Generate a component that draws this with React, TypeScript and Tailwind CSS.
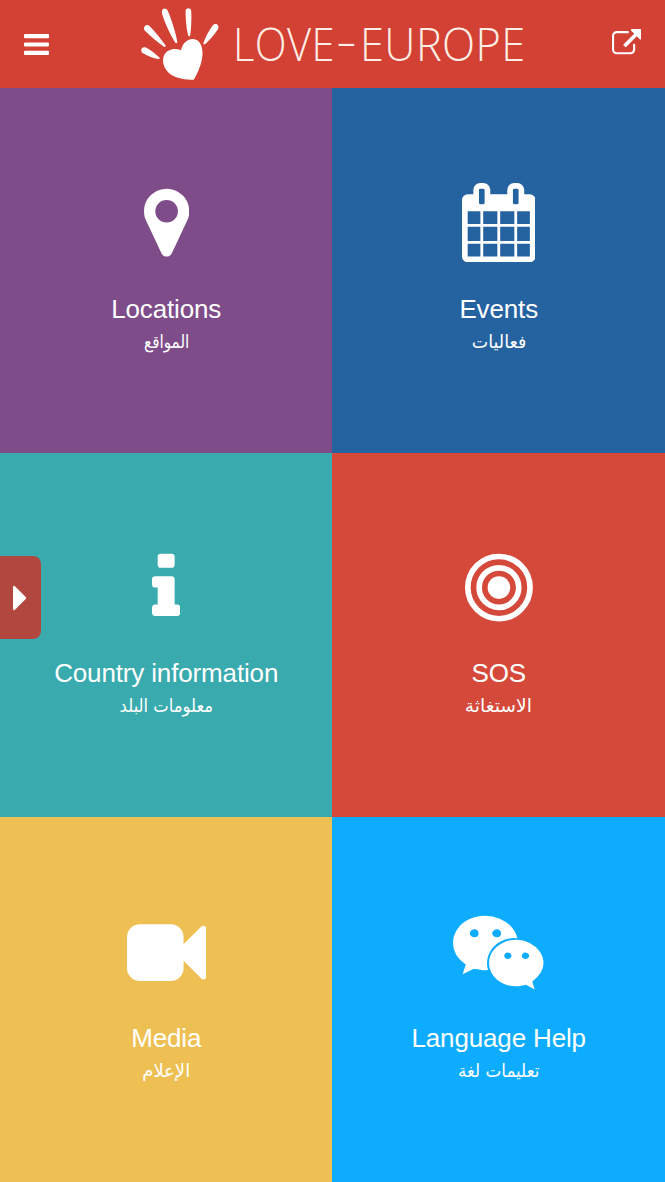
import type {ReactNode} from "react";

interface Tile {
	label: string;
	arabic: string;
	arabicScale: string;
	color: string;
	width: number;
	icon: ReactNode;
}

const tiles: Tile[] = [
	{
		label: "Locations",
		arabic: "المواقع",
		arabicScale: "scale-x-[0.85]",
		color: "bg-[#7e4c88]",
		width: 1024,
		icon: (
			<path d="M768 640q0-106-75-181t-181-75-181 75-75 181 75 181 181 75 181-75 75-181zm256 0q0 109-33 179l-364 774q-16 33-47.5 52t-67.5 19-67.5-19-46.5-52l-365-774q-33-70-33-179 0-212 150-362t362-150 362 150 150 362z" />
		),
	},
	{
		label: "Events",
		arabic: "فعاليات",
		arabicScale: "scale-x-[0.97]",
		color: "bg-[#2562a0]",
		width: 1664,
		icon: (
			<path d="M128 1664h288v-288h-288v288zm352 0h320v-288h-320v288zm-352-352h288v-320h-288v320zm352 0h320v-320h-320v320zm-352-384h288v-288h-288v288zm736 736h320v-288h-320v288zm-384-736h320v-288h-320v288zm768 736h288v-288h-288v288zm-384-352h320v-320h-320v320zm-352-864v-288q0-13-9.5-22.5t-22.5-9.5h-64q-13 0-22.5 9.5t-9.5 22.5v288q0 13 9.5 22.5t22.5 9.5h64q13 0 22.5-9.5t9.5-22.5zm736 864h288v-320h-288v320zm-384-384h320v-288h-320v288zm384 0h288v-288h-288v288zm32-480v-288q0-13-9.5-22.5t-22.5-9.5h-64q-13 0-22.5 9.5t-9.5 22.5v288q0 13 9.5 22.5t22.5 9.5h64q13 0 22.5-9.5t9.5-22.5zm384-64v1280q0 52-38 90t-90 38h-1408q-52 0-90-38t-38-90v-1280q0-52 38-90t90-38h128v-96q0-66 47-113t113-47h64q66 0 113 47t47 113v96h384v-96q0-66 47-113t113-47h64q66 0 113 47t47 113v96h128q52 0 90 38t38 90z" />
		),
	},
	{
		label: "Country information",
		arabic: "معلومات البلد",
		arabicScale: "scale-x-[0.91]",
		color: "bg-[#39aaad]",
		width: 640,
		icon: (
			<path d="M640 1344v128q0 26-19 45t-45 19h-512q-26 0-45-19t-19-45v-128q0-26 19-45t45-19h64v-384h-64q-26 0-45-19t-19-45v-128q0-26 19-45t45-19h384q26 0 45 19t19 45v576h64q26 0 45 19t19 45zm-128-1152v192q0 26-19 45t-45 19h-256q-26 0-45-19t-19-45v-192q0-26 19-45t45-19h256q26 0 45 19t19 45z" />
		),
	},
	{
		label: "SOS",
		arabic: "الاستغاثة",
		arabicScale: "scale-x-[1.04]",
		color: "bg-[#d5493b]",
		width: 1536,
		icon: (
			<>
				<circle cx="768" cy="896" r="256" />
				<g fill="none" stroke="currentColor" strokeWidth="128">
					<circle cx="768" cy="896" r="448" />
					<circle cx="768" cy="896" r="704" />
				</g>
			</>
		),
	},
	{
		label: "Media",
		arabic: "الإعلام",
		arabicScale: "scale-x-100",
		color: "bg-[#eec053]",
		width: 1792,
		icon: (
			<path d="M1792 352v1088q0 42-39 59-13 5-25 5-27 0-45-19l-403-403v166q0 119-84.5 203.5t-203.5 84.5h-704q-119 0-203.5-84.5t-84.5-203.5v-704q0-119 84.5-203.5t203.5-84.5h704q119 0 203.5 84.5t84.5 203.5v165l403-402q18-19 45-19 12 0 25 5 39 17 39 59z" />
		),
	},
	{
		label: "Language Help",
		arabic: "تعليمات لغة",
		arabicScale: "scale-x-[0.93]",
		color: "bg-[#0dacff]",
		width: 2048,
		icon: (
			<path d="M580 461q0-41-25-66t-66-25q-43 0-76 25.5t-33 65.5q0 39 33 64.5t76 25.5q41 0 66-24.5t25-65.5zm743 507q0-28-25.5-50t-65.5-22q-27 0-49.5 22.5t-22.5 49.5q0 28 22.5 50.5t49.5 22.5q40 0 65.5-22t25.5-51zm-236-507q0-41-24.5-66t-65.5-25q-43 0-76 25.5t-33 65.5q0 39 33 64.5t76 25.5q41 0 65.5-24.5t24.5-65.5zm635 507q0-28-26-50t-65-22q-27 0-49.5 22.5t-22.5 49.5q0 28 22.5 50.5t49.5 22.5q39 0 65-22t26-51zm-266-397q-31-4-70-4-169 0-311 77t-223.5 208.5-81.5 287.5q0 78 23 152-35 3-68 3-26 0-50-1.5t-55-6.5-44.5-7-54.5-10.5-50-10.5l-253 127 72-218q-290-203-290-490 0-169 97.5-311t264-223.5 363.5-81.5q176 0 332.5 66t262 182.5 136.5 260.5zm592 561q0 117-68.5 223.5t-185.5 193.5l55 181-199-109q-150 37-218 37-169 0-311-70.5t-223.5-191.5-81.5-264 81.5-264 223.5-191.5 311-70.5q161 0 303 70.5t227.5 192 85.5 263.5z" />
		),
	},
];

function HandLogo() {
	return (
		<svg className="h-[74px] w-[80px]" viewBox="140 7 80 74" fill="currentColor">
			<path d="M181 50.300C182.500 43 187.500 38.800 193 38.900C199.500 39.200 202.800 45.500 202.500 54C202.200 63 198 72.500 193.700 79.800C185.500 79.800 176 78.500 170 74C164 69 161.500 61.500 164 55.500C166.700 49.500 174.500 47.500 181 50.300Z" />
			<path d="M141.300 49.500C142 47.200 144 46.600 146 47.600C151 50.200 156 54.500 159.400 57.600C160.200 58.600 159.600 59.200 158.400 59C153.500 58.300 148 56 143 53.200C141.500 52.300 140.900 51 141.300 49.500Z" />
			<path d="M144.200 27.200C145.200 24.800 147.700 24.300 149.500 26C155.500 32 161.500 39.500 165.400 45.300C166 46.600 165.300 47.400 164 46.700C158.500 43 151.500 37 145.200 31C144 29.900 143.700 28.400 144.200 27.200Z" />
			<path d="M161.900 11.500C162.200 7.800 166 7.300 167.700 10.700C171.500 19 175.500 32 177.300 41.500C177.500 43.200 176.200 43.900 175.200 42.500C170.500 35 165 23.500 162.200 14C161.900 13 161.800 12.300 161.900 11.500Z" />
			<path d="M185.600 11C185.800 7.300 191 7.300 191.200 11C191.700 19 191.200 28 190.300 35C190 36.800 188.400 36.800 188 35C186.400 28 185.500 19 185.600 11Z" />
			<path d="M217.900 25.300C219 27 218.500 28.500 217.200 30.300C213.500 35.700 209.500 40.300 205.300 44C204 45 203 44.300 203.500 42.800C205.200 37.500 208.700 31 212.400 25.700C214 23.500 216.700 23.300 217.900 25.300Z" />
		</svg>
	);
}

function Header() {
	return (
		<header className="h-[88px] flex flex-row items-start bg-[#d24133]">
			<button type="button" aria-label="Menu" className="mt-[33.500px] ml-6">
				<svg className="w-[25px] h-[21px]" viewBox="0 256 1536 1280" fill="currentColor">
					<rect y="256" width="1536" height="256" rx="64" />
					<rect y="768" width="1536" height="256" rx="64" />
					<rect y="1280" width="1536" height="256" rx="64" />
				</svg>
			</button>
			<div className="flex flex-row mt-[7px] ml-[91px]">
				<HandLogo />
				<h1 className="w-[304px] pl-[13px] pt-[6px] font-['Open_Sans'] font-light text-[46px] leading-[60px] tracking-[0.5px] whitespace-nowrap text-[#ffeee6]">
					<span className="inline-block origin-left scale-x-[0.905]">LOVE</span>
					<span className="relative -left-[7px] -top-[4px] inline-block scale-x-[1.400]">-</span>
					<span className="relative -left-px inline-block origin-left scale-x-[0.94]">EUROPE</span>
				</h1>
			</div>
			<button type="button" aria-label="Share" className="mt-[29px] ml-[87.500px]">
				<svg className="w-[29.500px] h-[29.500px]" viewBox="0 0 1792 1792" fill="currentColor">
					<path d="M1408 928v320q0 119-84.500 203.500t-203.500 84.500h-832q-119 0-203.500-84.500t-84.500-203.500v-832q0-119 84.500-203.500t203.500-84.500h704q14 0 23 9t9 23v64q0 14-9 23t-23 9h-704q-66 0-113 47t-47 113v832q0 66 47 113t113 47h832q66 0 113-47t47-113v-320q0-14 9-23t23-9h64q14 0 23 9t9 23zm384-864v512q0 26-19 45t-45 19-45-19l-176-176-652 652q-10 10-23 10t-23-10l-114-114q-10-10-10-23t10-23l652-652-176-176q-19-19-19-45t19-45 45-19h512q26 0 45 19t19 45z" />
				</svg>
			</button>
		</header>
	);
}

export default function App() {
	return (
		<div className="relative w-[665px] h-[1182px] flex flex-col overflow-hidden text-white font-['Liberation_Sans',sans-serif]">
			<Header />
			<main className="flex-1 grid grid-cols-[332.400px_332.600px] grid-rows-3">
				{tiles.map((t) => (
					<section key={t.label} className={`flex flex-col items-center pt-[95.300px] ${t.color}`}>
						<svg className="h-[79.200px] w-auto" viewBox={`0 0 ${t.width} 1792`} fill="currentColor">
							{t.icon}
						</svg>
						<h2 className="mt-[31.200px] text-[26px] leading-[30px] tracking-[-0.15px]">{t.label}</h2>
						<p
							dir="rtl"
							lang="ar"
							className={`mt-[5px] text-[18px] leading-[26px] font-['DejaVu_Sans',sans-serif] ${t.arabicScale}`}
						>
							{t.arabic}
						</p>
					</section>
				))}
			</main>
			<button
				type="button"
				aria-label="Open panel"
				className="absolute left-0 top-[556px] w-[41px] h-[83px] pl-[13px] flex items-center rounded-r-[8px] bg-[#b1473e]"
			>
				<svg className="w-[14px] h-[26px]" viewBox="0 0 14 26" fill="currentColor">
					<path d="M0 2.500Q0 0 2 1.300L12.700 12Q13.700 13 12.700 14L2 24.700Q0 26 0 23.500Z" />
				</svg>
			</button>
		</div>
	);
}
